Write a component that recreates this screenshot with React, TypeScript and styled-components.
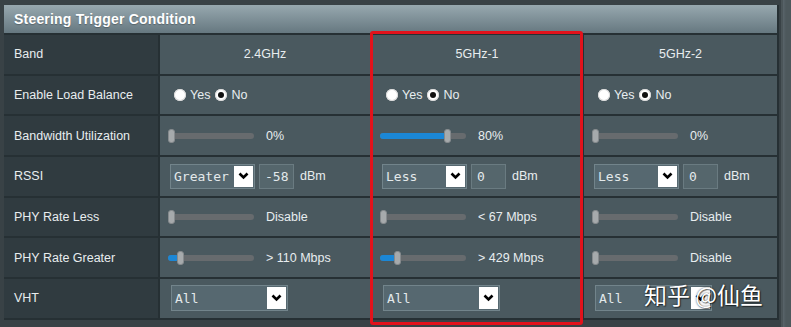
import React from 'react';
import styled, { createGlobalStyle } from 'styled-components';

const Global = createGlobalStyle`
  html, body { margin: 0; padding: 0; background: #3a4347; }
  body { font-family: "Liberation Sans", Arial, sans-serif; }
`;

const Page = styled.div`
  position: relative;
  width: 791px;
  height: 327px;
  box-sizing: border-box;
  padding: 5px 12px 0 4px;
  background: linear-gradient(to right, #394246 781px, #4b5559 781px, #4b5559 783px, #59646a 783px, #4d585c 786px);
  overflow: hidden;
`;

const Panel = styled.div`
  display: grid;
  grid-template-columns: 154px 210px 210px 1fr;
  grid-template-rows: 28px repeat(7, 38.7px);
  gap: 2px;
  background: #263034;
  border-bottom: 2px solid #263034;
  border-right: 2px solid #263034;
`;

const Header = styled.div`
  grid-column: 1 / -1;
  display: flex;
  align-items: center;
  padding-left: 10px;
  background: linear-gradient(#97a8af, #667880);
  color: #fff;
  font-weight: bold;
  font-size: 14px;
  letter-spacing: 0.2px;
  text-shadow: 0 1px 1px rgba(0, 0, 0, 0.25);
`;

const LabelCell = styled.div`
  display: flex;
  align-items: center;
  padding-left: 10px;
  background: #303b40;
  color: #e8edef;
  font-size: 12.5px;
`;

const ValueCell = styled.div<{ $center?: boolean; $pad?: number }>`
  display: flex;
  align-items: center;
  justify-content: ${(p) => (p.$center ? 'center' : 'flex-start')};
  padding-left: ${(p) => (p.$center ? 0 : p.$pad ?? 8)}px;
  background: #4a595f;
  color: #e8edef;
  font-size: 12.5px;
`;

const RadioOption = styled.label`
  display: flex;
  align-items: center;
  gap: 4px;
  margin-right: 5px;
`;

const RadioDot = styled.span<{ $checked?: boolean }>`
  position: relative;
  width: 12px;
  height: 12px;
  border-radius: 50%;
  background: #fff;
  box-shadow: inset 0 0 0 1px #d8d8d8;
  &::after {
    content: '';
    display: ${(p) => (p.$checked ? 'block' : 'none')};
    position: absolute;
    inset: 3px;
    border-radius: 50%;
    background: #111;
  }
`;

const SliderWrap = styled.div`
  display: flex;
  align-items: center;
  gap: 12px;
`;

const Track = styled.div`
  position: relative;
  width: 86px;
  height: 6px;
  border-radius: 3px;
  background: #676b6e;
`;

const Fill = styled.div`
  position: absolute;
  left: 0;
  top: 0;
  height: 6px;
  border-radius: 3px;
  background: #1b87d6;
`;

const Thumb = styled.div`
  position: absolute;
  top: -4px;
  width: 7px;
  height: 14px;
  box-sizing: border-box;
  border-radius: 3px;
  background: #a6aaac;
  border: 1px solid #858a8d;
`;

const Controls = styled.div`
  display: flex;
  align-items: center;
  gap: 4px;
`;

const Select = styled.div<{ $w: number; $h: number }>`
  display: flex;
  align-items: center;
  justify-content: space-between;
  width: ${(p) => p.$w}px;
  height: ${(p) => p.$h}px;
  box-sizing: border-box;
  padding: 0 1px 0 3px;
  background: #566870;
  border: 1px solid #72848b;
  font-family: "DejaVu Sans Mono", "Liberation Mono", monospace;
  font-size: 13px;
  color: #e3e9eb;
`;

const ArrowBox = styled.span`
  display: flex;
  align-items: center;
  justify-content: center;
  width: 19px;
  height: calc(100% - 2px);
  background: #fff;
`;

const NumInput = styled.div`
  display: flex;
  align-items: center;
  width: 35px;
  height: 25px;
  box-sizing: border-box;
  padding-left: 5px;
  background: #55666c;
  border: 1px solid #6a7b81;
  font-family: "DejaVu Sans Mono", "Liberation Mono", monospace;
  font-size: 13px;
  color: #e3e9eb;
`;

const Unit = styled.span`
  margin-left: 2px;
`;

const RedBox = styled.div`
  position: absolute;
  left: 370px;
  top: 31px;
  width: 213px;
  height: 294px;
  box-sizing: border-box;
  border: 3px solid #e2121b;
  border-radius: 3px;
  pointer-events: none;
`;

const Watermark = styled.div`
  position: absolute;
  left: 644px;
  top: 277px;
  font-family: "Noto Sans CJK SC", sans-serif;
  font-size: 23px;
  color: #fff;
  text-shadow: 0 0 2px rgba(0, 0, 0, 0.7), 1px 1px 1px rgba(0, 0, 0, 0.5);
  white-space: pre;
  pointer-events: none;
`;

const Chevron = () => (
  <svg width="11" height="8" viewBox="0 0 11 8">
    <path d="M1.5 1.5 L5.5 5.5 L9.5 1.5" fill="none" stroke="#000" strokeWidth="2.6" />
  </svg>
);

const Slider = ({ pos, text }: { pos: number; text: string }) => (
  <SliderWrap>
    <Track>
      {pos > 0 && <Fill style={{ width: pos + 2 }} />}
      <Thumb style={{ left: pos }} />
    </Track>
    <span>{text}</span>
  </SliderWrap>
);

const Radios = ({ yes }: { yes: boolean }) => (
  <>
    <RadioOption>
      <RadioDot $checked={yes} />
      Yes
    </RadioOption>
    <RadioOption>
      <RadioDot $checked={!yes} />
      No
    </RadioOption>
  </>
);

const bands = ['2.4GHz', '5GHz-1', '5GHz-2'];
const bw = [
  { pos: 0, text: '0%' },
  { pos: 64, text: '80%' },
  { pos: 0, text: '0%' },
];
const rssi = [
  { op: 'Greater', v: '-58' },
  { op: 'Less', v: '0' },
  { op: 'Less', v: '0' },
];
const phyLess = [
  { pos: 0, text: 'Disable' },
  { pos: 0, text: '< 67 Mbps' },
  { pos: 0, text: 'Disable' },
];
const phyGreater = [
  { pos: 9, text: '> 110 Mbps' },
  { pos: 14, text: '> 429 Mbps' },
  { pos: 0, text: 'Disable' },
];

export default function App() {
  return (
    <>
      <Global />
      <Page>
        <Panel>
          <Header>Steering Trigger Condition</Header>

          <LabelCell>Band</LabelCell>
          {bands.map((b) => (
            <ValueCell key={b} $center>
              {b}
            </ValueCell>
          ))}

          <LabelCell>Enable Load Balance</LabelCell>
          {bands.map((b) => (
            <ValueCell key={b} $pad={14}>
              <Radios yes={false} />
            </ValueCell>
          ))}

          <LabelCell>Bandwidth Utilization</LabelCell>
          {bw.map((s, i) => (
            <ValueCell key={i}>
              <Slider pos={s.pos} text={s.text} />
            </ValueCell>
          ))}

          <LabelCell>RSSI</LabelCell>
          {rssi.map((r, i) => (
            <ValueCell key={i} $pad={10}>
              <Controls>
                <Select $w={85} $h={25}>
                  {r.op}
                  <ArrowBox>
                    <Chevron />
                  </ArrowBox>
                </Select>
                <NumInput>{r.v}</NumInput>
                <Unit>dBm</Unit>
              </Controls>
            </ValueCell>
          ))}

          <LabelCell>PHY Rate Less</LabelCell>
          {phyLess.map((s, i) => (
            <ValueCell key={i}>
              <Slider pos={s.pos} text={s.text} />
            </ValueCell>
          ))}

          <LabelCell>PHY Rate Greater</LabelCell>
          {phyGreater.map((s, i) => (
            <ValueCell key={i}>
              <Slider pos={s.pos} text={s.text} />
            </ValueCell>
          ))}

          <LabelCell>VHT</LabelCell>
          {bands.map((b) => (
            <ValueCell key={b} $pad={11}>
              <Select $w={117} $h={26}>
                All
                <ArrowBox>
                  <Chevron />
                </ArrowBox>
              </Select>
            </ValueCell>
          ))}
        </Panel>
        <RedBox />
        <Watermark>知乎 @仙鱼</Watermark>
      </Page>
    </>
  );
}
